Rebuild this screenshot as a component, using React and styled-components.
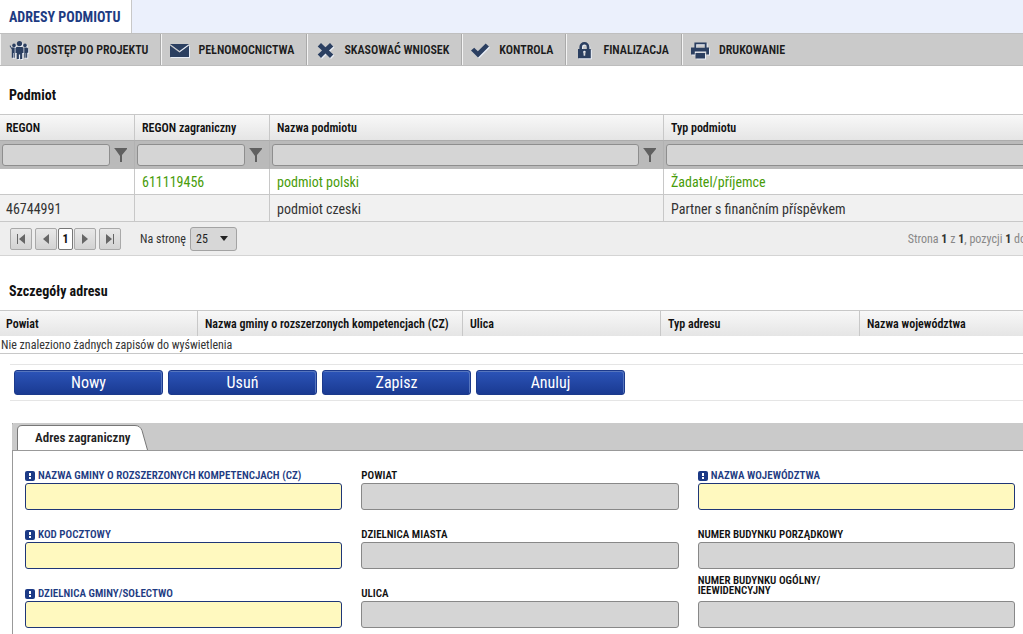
import React from 'react';
import styled, { createGlobalStyle } from 'styled-components';

const colors = {
    navy: '#1d3b82',
    icon: '#2b3f61',
    bar: '#cacaca',
    line: '#c8c8c8',
    green: '#489c09',
    text: '#333',
};

const GlobalStyle = createGlobalStyle`
    * {
        box-sizing: border-box;
    }

    body {
        margin: 0;
        background: #fff;
        color: #111;
        font-family: 'Roboto Condensed', 'Liberation Sans Narrow', Roboto, sans-serif;
        font-size: 14px;
    }

    button, input, select {
        font-family: inherit;
        margin: 0;
    }
`;

const Page = styled.div`
    overflow: hidden;
`;

const TabStrip = styled.nav`
    display: flex;
    height: 33px;
    background: #ebf0fc;
`;

const PageTab = styled.a`
    padding: 0 11px 0 9px;
    border-right: 1px solid ${colors.line};
    background: #fff;
    color: ${colors.navy};
    font-size: 14px;
    font-weight: 700;
    line-height: 34px;
    text-decoration: none;
`;

const Toolbar = styled.div`
    display: flex;
    height: 33px;
    background: ${colors.bar};
    border-top: 1px solid #bfbfbf;
    border-bottom: 1px solid #bdbdbd;
`;

const ToolButton = styled.button`
    display: flex;
    align-items: center;
    padding: 0 12px 0 8px;
    border: 0;
    border-left: 1px solid #f4f4f4;
    border-right: 1px solid ${({ $last }) => ($last ? 'transparent' : '#aaa')};
    background: none;
    color: #1c1c1c;
    font-size: 12px;
    font-weight: 600;
    white-space: nowrap;

    svg {
        width: 20px;
        height: 20px;
        margin-right: 8px;
        fill: ${colors.icon};
        filter: drop-shadow(1px 1px 0 #e8edf6);
    }
`;

const SectionTitle = styled.h2`
    margin: 0;
    padding: ${({ $top }) => $top}px 9px 10px;
    font-size: 14px;
    font-weight: 700;
    line-height: 18px;
`;

const Grid = styled.table`
    width: calc(100% + ${({ $extra }) => $extra}px);
    table-layout: fixed;
    border-collapse: separate;
    border-spacing: 0;
    border-top: 1px solid ${colors.line};
`;

const HeadCell = styled.th`
    height: 25px;
    width: ${({ $w }) => ($w ? `${$w}px` : 'auto')};
    padding: 1px 7px 0 6px;
    border-right: 1px solid ${colors.line};
    background: linear-gradient(#f8f8f8, #e5e5e5);
    color: #111;
    font-size: 12px;
    font-weight: 600;
    text-align: left;
    white-space: nowrap;

    & + & {
        padding-left: 7px;
    }
`;

const FilterCell = styled.td`
    height: 29px;
    padding: 0 2px;
    border-right: 1px solid #b2b2b2;
    border-top: 1px solid #acacac;
    background: #bababa;
`;

const FilterBox = styled.div`
    display: flex;
    align-items: center;

    svg {
        flex: none;
        width: 13px;
        height: 16px;
        margin: 0 5px 0 4px;
        fill: #606060;
    }
`;

const FilterInput = styled.input`
    flex: 1;
    min-width: 0;
    height: 22px;
    border: 1px solid #8e8e8e;
    border-radius: 3px;
    background: #d5d5d5;
`;

const Cell = styled.td`
    height: ${({ $alt }) => ($alt ? 27 : 26)}px;
    padding: 1px 7px 0 6px;
    border-right: 1px solid ${colors.line};
    border-bottom: 1px solid ${colors.line};
    background: ${({ $alt }) => ($alt ? '#f1f1f1' : '#fff')};
    color: ${({ $active }) => ($active ? colors.green : colors.text)};
    white-space: nowrap;

    & + & {
        padding-left: 7px;
    }
`;

const EmptyCell = styled.td`
    height: 18px;
    padding: 0 1px;
    border-bottom: 1px solid ${colors.line};
    color: ${colors.text};
    font-size: 12px;
`;

const Pager = styled.div`
    display: flex;
    align-items: center;
    height: 34px;
    margin-right: -3px;
    padding-left: 10px;
    border-bottom: 1px solid #d4d4d4;
    background: #eee;
    color: ${colors.text};
    font-size: 12px;
`;

const PagerButtons = styled.div`
    display: flex;
    gap: 3px;
    margin-right: 19px;
`;

const PagerPair = styled.div`
    display: flex;
    gap: 1px;
`;

const PagerButton = styled.button`
    display: flex;
    align-items: center;
    justify-content: center;
    width: 22px;
    height: 22px;
    padding: 0;
    border: 1px solid #a9a9a9;
    border-radius: 2px;
    background: linear-gradient(#e8e8e8, #d3d3d3);

    svg {
        width: 10px;
        height: 10px;
        fill: #666;
    }
`;

const CurrentPage = styled(PagerButton)`
    width: 15px;
    border-color: #777;
    background: #fff;
    color: #111;
    font-size: 12px;
    font-weight: 700;
`;

const PageSize = styled.label`
    display: flex;
    align-items: center;
    gap: 4px;
`;

const SelectWrap = styled.span`
    display: grid;
    align-items: center;

    select, svg {
        grid-area: 1 / 1;
    }

    svg {
        justify-self: end;
        width: 8px;
        height: 5px;
        margin-right: 9px;
        fill: #222;
        pointer-events: none;
    }
`;

const Select = styled.select`
    width: 47px;
    height: 24px;
    padding: 0 5px;
    border: 1px solid #a3a3a3;
    border-radius: 3px;
    appearance: none;
    background: #d7d7d7;
    color: #222;
    font-size: 12px;
`;

const PagerInfo = styled.span`
    margin-left: auto;
    color: #888;
    white-space: nowrap;

    b {
        color: #333;
    }
`;

const Actions = styled.div`
    display: flex;
    gap: 5px;
    margin: 10px 0 0 10px;
    padding: 5px 4px;
    border-top: 1px solid #e5e5e5;
    border-bottom: 1px solid #e5e5e5;
`;

const ActionButton = styled.button`
    width: 149px;
    height: 25px;
    padding: 0;
    border: 1px solid #1c3a8c;
    border-radius: 3px;
    background: linear-gradient(#2c54b8, #1a3a92);
    box-shadow: inset -1px 1px 0 #5675bd;
    color: #fff;
    font-size: 16px;
    line-height: 22px;
`;

const Panel = styled.section`
    margin: 22px 0 0 12px;
    border-left: 1px solid #999;
`;

const PanelHead = styled.div`
    display: flex;
    align-items: flex-end;
    height: 28px;
    margin-left: -1px;
    padding-left: 5px;
    border-bottom: 1px solid #999;
    border-top-left-radius: 2px;
    background: ${colors.bar};
`;

const PanelTab = styled.button`
    display: grid;
    align-items: center;
    padding: 0;
    border: 0;
    background: none;
    color: #222;
    font-size: 13px;
    font-weight: 600;

    svg, span {
        grid-area: 1 / 1;
    }

    span {
        text-align: left;
        padding-left: 18px;
    }
`;

const Form = styled.form`
    display: grid;
    grid-template-columns: repeat(3, 1fr);
    gap: 7px 19px;
    padding: 7px 8px 6px 12px;
`;

const Field = styled.div`
    display: flex;
    flex-direction: column;
`;

const FieldLabel = styled.label`
    display: flex;
    align-items: ${({ $tall }) => ($tall ? 'flex-start' : 'flex-end')};
    height: 25px;
    padding-bottom: ${({ $tall }) => ($tall ? 0 : 2)}px;
    color: ${({ $required }) => ($required ? colors.navy : '#111')};
    font-size: 11px;
    font-weight: 600;
    line-height: 10px;
    white-space: pre-line;

    svg {
        width: 10px;
        height: 10px;
        margin-right: 3px;
        fill: #1c3a86;
    }
`;

const TextInput = styled.input`
    width: 100%;
    height: 27px;
    border: 1px solid ${({ $required }) => ($required ? '#1f3677' : '#888')};
    border-radius: 3px;
    background: ${({ $required }) => ($required ? '#fff9bf' : '#d5d5d5')};
`;

const PeopleIcon = () => (
    <svg viewBox="0 0 20 20">
        <circle cx="10.5" cy="3.6" r="2.6" />
        <circle cx="5" cy="5.4" r="1.8" />
        <circle cx="16" cy="5.4" r="1.8" />
        <path d="M7.6 7h5.8l1.1 1v5h-1.3v6h-2.1v-4.5H9.9V19H7.8v-6H6.5V8z" />
        <path d="M1.2 5.2l1.3 2.3h3.2v10.3H4.6V13H4v4.8H2.8V9.6L.6 6z" />
        <path d="M15.3 7.5h2.5l1.4 1v4.3h-1v5h-1.1V13h-.5v4.8h-1.3z" />
    </svg>
);

const MailIcon = () => (
    <svg viewBox="0 0 20 20">
        <path d="M0 4h19l-9.500 7zM0 5.600l9.500 7 9.500-7V17H0z" />
    </svg>
);

const CrossIcon = () => (
    <svg viewBox="0 0 20 20">
        <path d="M5 3l4.5 4.2L14 3l3.3 3.4-4.3 4 4.3 4.1-3.3 3.4-4.5-4.3L5 17.9l-3.3-3.4L6 10.4l-4.3-4z" />
    </svg>
);

const CheckIcon = () => (
    <svg viewBox="0 0 20 20">
        <path d="M0 10.6L3.2 7.7l3.7 3.5L14.7 3.6 18 6.4 7 17.4z" />
    </svg>
);

const LockIcon = () => (
    <svg viewBox="0 0 20 20">
        <path fillRule="evenodd" d="M4.400 9V7a5 5 0 0 1 10 0v2h1.400v9.200H3V9zM7 9h4.800V7a2.400 2.400 0 0 0-4.800 0zm1.500 3.900l.2 2.900h1.500l.2-2.900a1.300 1.300 0 1 0-1.900 0z" />
    </svg>
);

const PrintIcon = () => (
    <svg viewBox="0 0 20 20">
        <path fillRule="evenodd" d="M3.400 2.500h12.200v5H18v7h-2.800v-3H3.800v3H0v-7h3.400zM5.200 4.300v3.500h8.600V4.300zM4.500 13h9.500v5.400H4.500z" />
    </svg>
);

const FunnelIcon = () => (
    <svg viewBox="0 0 13 16">
        <path d="M0 1h13v1L8 8v7H6V9L1 2z" />
    </svg>
);

const RequiredIcon = () => (
    <svg viewBox="0 0 10 10">
        <rect width="10" height="10" rx="2" />
        <path d="M4 2h2v3H4zM4 6h2v2H4z" fill="#fff" />
    </svg>
);

const tools = [
    ['DOSTĘP DO PROJEKTU', PeopleIcon],
    ['PEŁNOMOCNICTWA', MailIcon],
    ['SKASOWAĆ WNIOSEK', CrossIcon],
    ['KONTROLA', CheckIcon],
    ['FINALIZACJA', LockIcon],
    ['DRUKOWANIE', PrintIcon],
];

const subjectColumns = [
    { title: 'REGON', width: 135 },
    { title: 'REGON zagraniczny', width: 135 },
    { title: 'Nazwa podmiotu', width: 394 },
    { title: 'Typ podmiotu' },
];

const subjects = [
    ['', '611119456', 'podmiot polski', 'Žadatel/příjemce'],
    ['46744991', '', 'podmiot czeski', 'Partner s finančním příspěvkem'],
];

const addressColumns = [
    { title: 'Powiat', width: 198 },
    { title: 'Nazwa gminy o rozszerzonych kompetencjach (CZ)', width: 265 },
    { title: 'Ulica', width: 198 },
    { title: 'Typ adresu', width: 199 },
    { title: 'Nazwa województwa' },
];

const fields = [
    { id: 'gmina', label: 'NAZWA GMINY O ROZSZERZONYCH KOMPETENCJACH (CZ)', required: true },
    { id: 'powiat', label: 'POWIAT' },
    { id: 'wojewodztwo', label: 'NAZWA WOJEWÓDZTWA', required: true },
    { id: 'kod', label: 'KOD POCZTOWY', required: true },
    { id: 'dzielnica', label: 'DZIELNICA MIASTA' },
    { id: 'numer', label: 'NUMER BUDYNKU PORZĄDKOWY' },
    { id: 'solectwo', label: 'DZIELNICA GMINY/SOŁECTWO', required: true },
    { id: 'ulica', label: 'ULICA' },
    { id: 'ewidencja', label: 'NUMER BUDYNKU OGÓLNY/\nIEEWIDENCYJNY', tall: true },
];

const App = () => {
    return (
        <Page>
            <GlobalStyle />
            <TabStrip>
                <PageTab href="#adresy">ADRESY PODMIOTU</PageTab>
            </TabStrip>
            <Toolbar>
                {tools.map(([label, Icon], i) => (
                    <ToolButton key={label} type="button" $last={i === tools.length - 1}>
                        <Icon />
                        {label}
                    </ToolButton>
                ))}
            </Toolbar>

            <SectionTitle $top={20}>Podmiot</SectionTitle>
            <Grid $extra={60}>
                <thead>
                    <tr>
                        {subjectColumns.map(({ title, width }) => (
                            <HeadCell key={title} $w={width}>{title}</HeadCell>
                        ))}
                    </tr>
                </thead>
                <tbody>
                    <tr>
                        {subjectColumns.map(({ title }) => (
                            <FilterCell key={title}>
                                <FilterBox>
                                    <FilterInput aria-label={title} />
                                    <FunnelIcon />
                                </FilterBox>
                            </FilterCell>
                        ))}
                    </tr>
                    {subjects.map((row, r) => (
                        <tr key={row[2]}>
                            {row.map((value, c) => (
                                <Cell key={c} $active={r === 0} $alt={r % 2 === 1}>{value}</Cell>
                            ))}
                        </tr>
                    ))}
                </tbody>
            </Grid>
            <Pager>
                <PagerButtons>
                    <PagerButton type="button" aria-label="Pierwsza">
                        <svg viewBox="0 0 10 10"><path d="M1 0h1v10H1zM9 0v10L3 5z" /></svg>
                    </PagerButton>
                    <PagerPair>
                        <PagerButton type="button" aria-label="Poprzednia">
                            <svg viewBox="0 0 10 10"><path d="M8 0v10L2 5z" /></svg>
                        </PagerButton>
                        <CurrentPage type="button">1</CurrentPage>
                        <PagerButton type="button" aria-label="Następna">
                            <svg viewBox="0 0 10 10"><path d="M2 0v10l6-5z" /></svg>
                        </PagerButton>
                    </PagerPair>
                    <PagerButton type="button" aria-label="Ostatnia">
                        <svg viewBox="0 0 10 10"><path d="M8 0h1v10H8zM1 0v10l6-5z" /></svg>
                    </PagerButton>
                </PagerButtons>
                <PageSize>
                    Na stronę
                    <SelectWrap>
                        <Select defaultValue="25">
                            <option>25</option>
                            <option>50</option>
                        </Select>
                        <svg viewBox="0 0 8 5"><path d="M0 0h8L4 5z" /></svg>
                    </SelectWrap>
                </PageSize>
                <PagerInfo>
                    Strona <b>1</b> z <b>1</b>, pozycji <b>1</b> do
                </PagerInfo>
            </Pager>

            <SectionTitle $top={26}>Szczegóły adresu</SectionTitle>
            <Grid $extra={60}>
                <thead>
                    <tr>
                        {addressColumns.map(({ title, width }) => (
                            <HeadCell key={title} $w={width}>{title}</HeadCell>
                        ))}
                    </tr>
                </thead>
                <tbody>
                    <tr>
                        <EmptyCell colSpan={addressColumns.length}>
                            Nie znaleziono żadnych zapisów do wyświetlenia
                        </EmptyCell>
                    </tr>
                </tbody>
            </Grid>

            <Actions>
                {['Nowy', 'Usuń', 'Zapisz', 'Anuluj'].map((label) => (
                    <ActionButton key={label} type="button">{label}</ActionButton>
                ))}
            </Actions>

            <Panel>
                <PanelHead>
                    <PanelTab type="button">
                        <svg width="131" height="25" viewBox="0 0 131 25">
                            <path d="M.5 25V5Q.5.5 5 .5h113q5 0 7 5l5.500 19.500" fill="#fff" stroke="#777" />
                        </svg>
                        <span>Adres zagraniczny</span>
                    </PanelTab>
                </PanelHead>
                <Form>
                    {fields.map(({ id, label, required, tall }) => (
                        <Field key={id}>
                            <FieldLabel htmlFor={id} $required={required} $tall={tall}>
                                {required && <RequiredIcon />}
                                {label}
                            </FieldLabel>
                            <TextInput id={id} $required={required} />
                        </Field>
                    ))}
                </Form>
            </Panel>
        </Page>
    );
};

export default App;
